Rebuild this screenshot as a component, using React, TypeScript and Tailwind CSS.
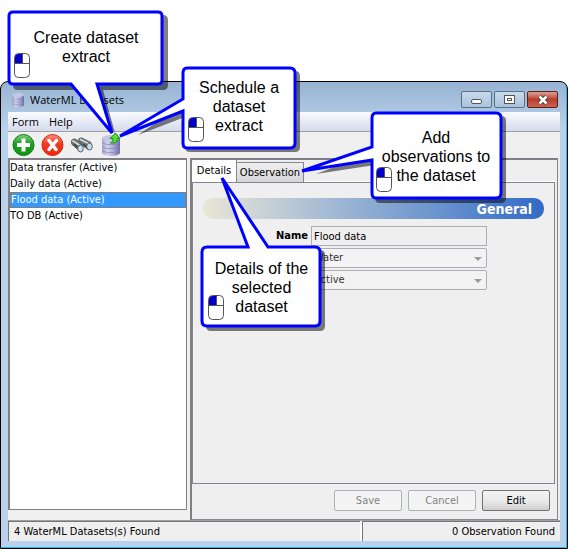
import React from 'react';

const datasets = ['Data transfer (Active)', 'Daily data (Active)', 'Flood data (Active)', 'TO DB (Active)'];

function CylinderIcon({ className }: { className: string }) {
  return (
    <svg className={className} viewBox="0 0 18 21" aria-hidden="true">
      <defs>
        <linearGradient id="cyl" x1="0" x2="1">
          <stop offset="0" stopColor="#a3a3cf" />
          <stop offset="0.3" stopColor="#d3d3ee" />
          <stop offset="0.6" stopColor="#b0b0d8" />
          <stop offset="1" stopColor="#6a6a9e" />
        </linearGradient>
      </defs>
      <path d="M0 3v14.500c0 4.500 18 4.500 18 0V3z" fill="url(#cyl)" />
      <path d="M0 7c0 3.500 18 3.500 18 0M0 11c0 3.500 18 3.500 18 0M0 15c0 3.500 18 3.500 18 0" fill="none" stroke="#8888b8" strokeWidth="0.800" />
      <ellipse cx="9" cy="3" rx="9" ry="3" fill="#c6c6e4" />
    </svg>
  );
}

function AddIcon() {
  return (
    <svg className="h-6 w-6" viewBox="0 0 24 24" aria-hidden="true">
      <defs>
        <linearGradient id="green" x1="0" y1="0" x2="0" y2="1">
          <stop offset="0" stopColor="#7fcf78" />
          <stop offset="0.45" stopColor="#1c9c24" />
          <stop offset="1" stopColor="#0a9a10" />
        </linearGradient>
      </defs>
      <circle cx="11.500" cy="12" r="10.500" fill="url(#green)" stroke="#137a18" />
      <path d="M9.500 5.500h4v4.500h4.500v4h-4.500v4.500h-4V14H5v-4h4.500z" fill="#fff" />
    </svg>
  );
}

function DeleteIcon() {
  return (
    <svg className="h-6 w-6" viewBox="0 0 24 24" aria-hidden="true">
      <defs>
        <linearGradient id="red" x1="0" y1="0" x2="0" y2="1">
          <stop offset="0" stopColor="#ff8f78" />
          <stop offset="0.45" stopColor="#ee3a20" />
          <stop offset="1" stopColor="#f5250c" />
        </linearGradient>
      </defs>
      <circle cx="11.500" cy="12" r="10.500" fill="url(#red)" stroke="#cf2a14" />
      <path d="M8 7.500l7 9M15.500 7.500l-7.500 9" stroke="#fff" strokeWidth="3.500" strokeLinecap="round" />
    </svg>
  );
}

function SearchIcon() {
  return (
    <svg className="h-4 w-6" viewBox="0 0 24 16" aria-hidden="true">
      <path d="M1.500 3.500Q3 1.500 5 2l8 4.500-4 7-7-6Q1 5.500 1.500 3.500z" fill="#6f7476" stroke="#4c5051" strokeWidth="0.800" />
      <path d="M8.500 2Q10 .5 12 1l9 4.500-3 7-7-5z" fill="#6f7476" stroke="#4c5051" strokeWidth="0.800" />
      <path d="M3 4l7 4.500M10.500 2.500l8 4" stroke="#d6d9da" strokeWidth="1.800" strokeLinecap="round" />
      <path d="M4 7l4 4M13 7l3 2.500" stroke="#3c4041" strokeWidth="1.500" />
      <ellipse cx="10.500" cy="11.500" rx="2.800" ry="3.500" fill="#c3def5" stroke="#5b6062" />
      <ellipse cx="19.500" cy="9.500" rx="2.800" ry="3.500" fill="#c3def5" stroke="#5b6062" />
    </svg>
  );
}

function UpArrowIcon({ className }: { className: string }) {
  return (
    <svg className={className} viewBox="0 0 12 12" aria-hidden="true">
      <path d="M1.500 11c2-.8 2.500-2 2.500-4.500H1L6.500 1 11 6.500H8.500C8.500 10 6 11.500 1.500 11z" fill="#55dd35" stroke="#1c8a1c" />
    </svg>
  );
}

function MouseIcon({ className }: { className: string }) {
  return (
    <svg className={className} viewBox="0 0 17 26" aria-hidden="true">
      <rect x="0.500" y="0.500" width="15" height="24" rx="4" fill="#fff" stroke="#555" />
      <path d="M1 10V4.500Q1 1 4.500 1H8v9z" fill="#0000c8" />
      <path d="M8.500 1v10M1 10.500h15" stroke="#555" fill="none" />
    </svg>
  );
}

const callouts = [
  {
    bubble: 'M13 12H158Q162 12 162 16V80Q162 84 158 84H97L112 133L71 84H13Q9 84 9 80V16Q9 12 13 12Z',
    shadow: 'M13 15H163Q168 15 168 20V85Q168 90 163 90H103L115 133L76 90H18Q13 90 13 85Z',
  },
  {
    bubble: 'M187 68H290Q295 68 295 73V143Q295 148 290 148H187Q183 148 183 143V111L120 136L183 99V73Q183 68 187 68Z',
    shadow: 'M187 71H295Q300 71 300 76V147Q300 152 295 152H190Q185 152 185 147V117L138 135L185 103Z',
  },
  {
    bubble: 'M376 113H496Q501 113 501 118V193Q501 198 496 198H376Q372 198 372 193V160L302 171L372 147V118Q372 113 376 113Z',
    shadow: 'M376 116H501Q506 116 506 121V198Q506 203 501 203H380Q375 203 375 198V165L316 174L375 151Z',
  },
  {
    bubble: 'M207 247H248L222 178L268 247H315Q320 247 320 252V321Q320 326 315 326H207Q202 326 202 321V252Q202 247 207 247Z',
    shadow: 'M207 250H320Q325 250 325 255V326Q325 331 320 331H211Q206 331 206 326Z',
  },
];

function Callouts() {
  return (
    <div className="pointer-events-none absolute inset-0 font-['Liberation_Sans',Arial,sans-serif] text-base leading-[19px] text-black">
      <svg className="absolute left-0 top-0 h-[549px] w-[568px]" viewBox="0 0 568 549" aria-hidden="true">
        {callouts.map(({ bubble, shadow }) => (
          <g key={bubble}>
            <path d={shadow} opacity="0.500" />
            <path d={bubble} fill="#fff" stroke="#00f" strokeWidth="3" />
          </g>
        ))}
      </svg>
      <p className="absolute left-[8px] top-[28px] w-[156px] text-center">Create dataset<br />extract</p>
      <MouseIcon className="absolute left-[14px] top-[53px] h-[26px] w-[17px]" />
      <p className="absolute left-[182px] top-[78px] w-[114px] text-center">Schedule a<br />dataset<br />extract</p>
      <MouseIcon className="absolute left-[188px] top-[117px] h-[26px] w-[17px]" />
      <p className="absolute left-[371px] top-[128px] w-[130px] text-center">Add<br />observations to<br />the dataset</p>
      <MouseIcon className="absolute left-[376px] top-[167px] h-[26px] w-[17px]" />
      <p className="absolute left-[202px] top-[259px] w-[119px] text-center">Details of the<br />selected<br />dataset</p>
      <MouseIcon className="absolute left-[208px] top-[295px] h-[26px] w-[17px]" />
    </div>
  );
}

function TitleBar() {
  const button = 'flex h-[17px] w-[31px] items-center justify-center rounded-xs border';
  return (
    <header className="flex h-[30px] items-center pr-[2px] pt-[5px] font-['Open_Sans',sans-serif] text-[11px] text-black">
      <CylinderIcon className="ml-1 mr-[6px] h-[14px] w-3" />
      <span className="leading-4">WaterML Datasets</span>
      <div className="ml-auto flex gap-[2px]">
        <button className={`${button} border-[#5b7088] bg-linear-to-b from-[#c9daec] to-[#a8c2dd]`} aria-label="Minimize">
          <span className="mt-1 h-[5px] w-[11px] rounded-xs border border-[#555] bg-white" />
        </button>
        <button className={`${button} border-[#5b7088] bg-linear-to-b from-[#c9daec] to-[#a8c2dd]`} aria-label="Maximize">
          <span className="flex h-[9px] w-[11px] items-center justify-center border border-[#555] bg-white">
            <span className="h-[3px] w-[5px] border border-[#555]" />
          </span>
        </button>
        <button className={`${button} border-[#5a2020] bg-linear-to-b from-[#dda197] via-[#b93c2a] to-[#c8654f]`} aria-label="Close">
          <svg className="h-[10px] w-3" viewBox="0 0 12 10">
            <path d="M2.500 1.500l7 7M9.500 1.500l-7 7" stroke="#4c3c44" strokeWidth="4.500" />
            <path d="M2.500 1.500l7 7M9.500 1.500l-7 7" stroke="#fff" strokeWidth="2.500" />
          </svg>
        </button>
      </div>
    </header>
  );
}

function SelectField({ label, value }: { label: string; value: string }) {
  return (
    <div className="relative col-start-2 flex">
      <select
        aria-label={label}
        disabled
        className="h-5 w-full appearance-none rounded-xs border border-[#adadb3] bg-[#f3f3f3] px-[2px] text-[#333] opacity-100"
      >
        <option>{value}</option>
      </select>
      <span className="absolute right-[5px] top-[9px] border-x-4 border-t-4 border-x-transparent border-t-[#9b9b9b]" />
    </div>
  );
}

function DetailsPanel() {
  return (
    <section className="flex min-w-0 flex-1 flex-col border-l-2 border-t-2 border-[#7f7f85] bg-[#efefef]">
      <div className="flex flex-1 flex-col border-b border-r border-[#85858f]">
        <div className="flex h-[22px] items-end" role="tablist">
          <button className="h-[22px] w-[45px] border-r border-[#85858f] bg-white" role="tab" aria-selected="true">Details</button>
          <button className="h-5 w-[67px] border border-b-0 border-l-0 border-[#85858f] bg-linear-to-b from-[#f0f0f0] to-[#d5d5d5]" role="tab" aria-selected="false">Observation</button>
          <span className="h-px flex-1 bg-white" />
        </div>
        <div className="mr-[2px] flex-1 border border-[#85858f] px-[10px] pt-[15px]">
          <h2 className="flex h-[21px] items-center justify-end rounded-[10px] bg-linear-to-r from-[#e9e7d6] to-[#316ac5] pr-3 text-sm font-bold text-white">General</h2>
          <form className="mt-[7px] grid w-[284px] grid-cols-[105px_1fr] items-center gap-x-[3px] gap-y-[2px]">
            <label htmlFor="name" className="text-right font-bold">Name</label>
            <input id="name" readOnly value="Flood data" className="h-5 w-full border border-[#adadb3] bg-[#efefef] px-[2px]" />
            <SelectField label="Type" value="Water" />
            <SelectField label="Status" value="Active" />
          </form>
        </div>
        <div className="flex justify-end gap-[6px] px-[7px] pb-2 pt-[6px]">
          <button disabled className="h-[21px] w-[68px] rounded-xs border border-[#adb2b5] bg-[#f4f4f4] text-[#838383]">Save</button>
          <button disabled className="h-[21px] w-[68px] rounded-xs border border-[#adb2b5] bg-[#f4f4f4] text-[#838383]">Cancel</button>
          <button className="h-[21px] w-[68px] rounded-xs border border-[#707070] bg-linear-to-b from-[#f3f3f3] via-[#ebebeb] to-[#cfcfcf] text-black">Edit</button>
        </div>
      </div>
    </section>
  );
}

export default function App() {
  return (
    <main className="relative flex min-h-screen flex-col bg-white pt-[81px] font-['DejaVu_Sans_Condensed','DejaVu_Sans',sans-serif] text-[11px] leading-4 text-black">
      <div className="flex flex-1 flex-col rounded-t-lg border border-black bg-linear-to-b from-[#98b4d2] to-[#b9d1ea] to-10% px-[7px] pb-[7px] shadow-[inset_-1px_-1px_0_#2bb8e0]">
        <TitleBar />
        <nav className="flex h-[19px] items-center gap-[10px] bg-linear-to-b from-[#fafbfe] to-[#d5dbee] px-1 font-['Open_Sans',sans-serif] text-[11px]">
          <button>Form</button>
          <button>Help</button>
        </nav>
        <div className="flex h-[27px] items-center gap-[5px] border-t border-[#a0a0a0] bg-[#f0f0f0] px-1">
          <button aria-label="Add dataset"><AddIcon /></button>
          <button aria-label="Delete dataset"><DeleteIcon /></button>
          <button aria-label="Find dataset"><SearchIcon /></button>
          <button className="ml-[3px]" aria-label="Create dataset extract">
            <CylinderIcon className="h-[21px] w-[18px]" />
          </button>
        </div>
        <div className="flex flex-1 gap-[3px] bg-[#f0f0f0] pr-[2px]">
          <ul className="mb-[10px] w-[179px] border border-l-2 border-t-2 border-[#7f7f85] bg-white" role="listbox" aria-label="Datasets">
            {datasets.map((name, i) => (
              <li
                key={name}
                role="option"
                aria-selected={i === 2}
                className={i === 2 ? 'h-4 border border-dotted border-[#cc6600] bg-[#3399ff] leading-[14px] text-white' : 'h-4'}
              >
                {name}
              </li>
            ))}
          </ul>
          <DetailsPanel />
        </div>
        <footer className="flex h-[21px] gap-[2px] border-t border-[#a0a0a0] bg-white leading-5">
          <span className="flex-1 border-l border-t border-[#777] bg-[#efefef] pl-[5px]">4 WaterML Datasets(s) Found</span>
          <span className="w-[198px] border-l border-t border-[#777] bg-[#efefef] pr-[5px] text-right">0 Observation Found</span>
        </footer>
      </div>
      <Callouts />
      <UpArrowIcon className="absolute left-[109px] top-[132px] h-3 w-3" />
    </main>
  );
}
